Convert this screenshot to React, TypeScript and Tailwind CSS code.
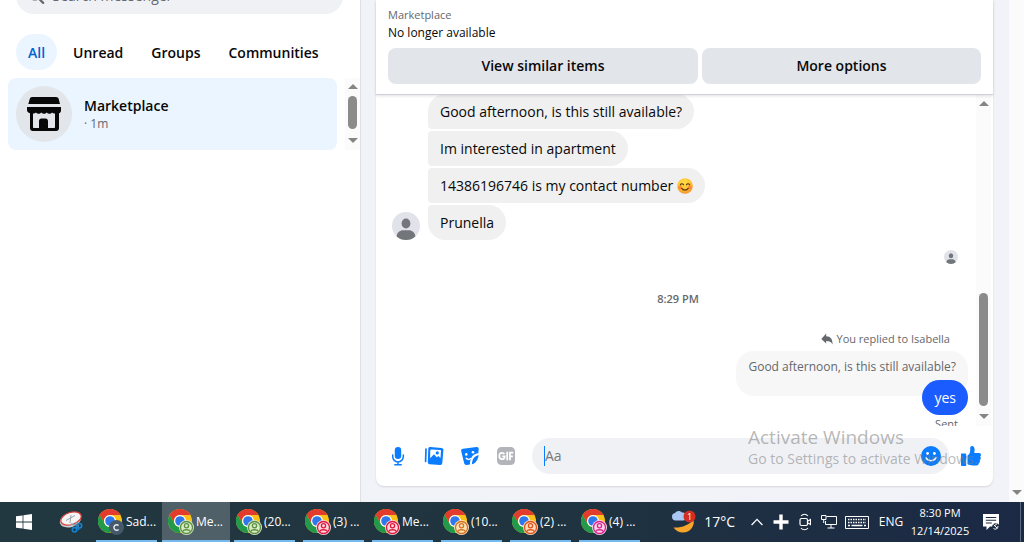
import React from "react";

const PersonAvatar = ({ className }: { className: string }) => (
  <svg viewBox="0 0 28 28" className={className} role="img" aria-label="Profile">
    <circle cx="14" cy="14" r="14" fill="#e2e3ea" />
    <ellipse cx="14" cy="11.500" rx="4.400" ry="5" fill="#727579" />
    <path d="M4.600 24.400C5 20.500 8 18.300 11 18.300h6c3 0 6 2.200 6.400 6.100A14 14 0 0 1 14 28a14 14 0 0 1-9.400-3.600z" fill="#727579" />
  </svg>
);

const StoreIcon = () => (
  <svg viewBox="0 0 34 34" className="size-[34px]" aria-hidden="true">
    <path d="M5 0h24c1.300 0 2.200.7 2.600 1.800L33 7H1.300l1.500-5.200C3.200.7 3.900 0 5 0z" fill="#080809" />
    <path d="M0 10h34v3.700c0 1.200-.8 2.200-2 2.500v15c0 1.600-1.200 2.800-2.800 2.800H5.800C4.200 34 3 32.800 3 31.200v-15c-1.800-.4-3-1.600-3-3z" fill="#080809" />
    <path d="M6 16.600c1.400 0 2.300-.5 2.900-1.200.8.900 1.700 1.300 2.700 1.300s2-.5 2.700-1.300c.8.900 1.700 1.300 2.700 1.300s2-.5 2.700-1.300c.8.900 1.700 1.300 2.700 1.300s2-.5 2.700-1.300c.6.700 1.500 1.200 2.900 1.200V30c0 .7-.4 1-1 1h-6v-7c0-1.400-1-2.500-2.400-2.500h-4.200c-1.400 0-2.400 1.100-2.400 2.500v7H7c-.6 0-1-.3-1-1z" fill="#e2e5ea" />
  </svg>
);

const SmileEmoji = () => (
  <svg viewBox="0 0 16 16" className="size-4" role="img" aria-label="Smiling face with smiling eyes">
    <defs>
      <radialGradient id="face" cx=".45" cy=".3" r=".75">
        <stop offset="0" stopColor="#ffe04a" />
        <stop offset=".6" stopColor="#ffc02e" />
        <stop offset="1" stopColor="#f2852b" />
      </radialGradient>
    </defs>
    <circle cx="8" cy="8" r="7.800" fill="url(#face)" />
    <circle cx="3.200" cy="9.600" r="2" fill="#fa7a3c" opacity=".75" />
    <circle cx="12.800" cy="9.600" r="2" fill="#fa7a3c" opacity=".75" />
    <path d="M3.400 6.800c.6-1.400 2.500-1.400 3.100 0M9.500 6.800c.6-1.400 2.500-1.400 3.100 0M4.800 10.400c1.400 2.200 5 2.200 6.400 0" fill="none" stroke="#5b3414" strokeWidth="1.200" strokeLinecap="round" />
  </svg>
);

const Caret = ({ down = false }: { down?: boolean }) => (
  <svg viewBox="0 0 10 5" className="h-[5px] w-2.5 shrink-0" aria-hidden="true">
    <path d={down ? "M0 0h10L5 5z" : "M0 5h10L5 0z"} fill="#858585" />
  </svg>
);

const badgeColors: Record<string, [string, string]> = {
  green: ["#5d8f45", "#d8ecc4"],
  red: ["#e0173c", "#ffd9df"],
  orange: ["#cf7420", "#ffe3bd"],
  deep: ["#dd5416", "#ffdcc4"],
  pink: ["#d6248a", "#ffd6ec"],
};

const ChromeIcon = ({ badge }: { badge: string }) => {
  const colors = badgeColors[badge];
  return (
    <svg viewBox="0 0 26 26" className="size-[26px] shrink-0" aria-hidden="true">
      <circle cx="12" cy="12" r="12" fill="#fbc116" />
      <path d="M1.600 6A12 12 0 0 1 22.400 6H12a6 6 0 0 0-5.200 9z" fill="#e33b2e" />
      <path d="M1.600 6A12 12 0 0 0 12 24l5.200-9a6 6 0 0 1-10.400 0z" fill="#229a4b" />
      <circle cx="12" cy="12" r="6" fill="#fff" />
      <circle cx="12" cy="12" r="4.800" fill="#2f78ec" />
      {colors ? (
        <>
          <circle cx="18.500" cy="18.500" r="7.500" fill={colors[1]} />
          <circle cx="18.500" cy="18.500" r="6" fill="none" stroke={colors[0]} strokeWidth="1.300" />
          <circle cx="18.500" cy="16.800" r="2.100" fill="none" stroke={colors[0]} strokeWidth="1.300" />
          <path d="M14.600 22.400c1-2.200 6.800-2.200 7.800 0" fill="none" stroke={colors[0]} strokeWidth="1.300" />
        </>
      ) : (
        <>
          <circle cx="18.500" cy="18.500" r="7.500" fill="#46596a" />
          <path d="M20.600 16.600a2.700 2.700 0 1 0 0 3.800" fill="none" stroke="#e8edf0" strokeWidth="1.400" />
        </>
      )}
    </svg>
  );
};

const tabs = ["All", "Unread", "Groups", "Communities"];

const apps = [
  { label: "Sad...", badge: "letter" },
  { label: "Me...", badge: "green", active: true },
  { label: "(20...", badge: "green" },
  { label: "(3) ...", badge: "red" },
  { label: "Me...", badge: "red" },
  { label: "(10...", badge: "orange" },
  { label: "(2) ...", badge: "deep" },
  { label: "(4) ...", badge: "pink" },
];

const bubble = "flex h-[35px] items-center gap-1 bg-[#f0f0f0] px-3 text-sm";

function Sidebar() {
  return (
    <aside className="flex w-[361px] shrink-0 flex-col border-r border-[#dfe0e4] bg-white">
      <div className="flex h-3.5 items-end overflow-hidden pr-[17px] pl-4">
        <label className="flex h-9 w-full shrink-0 items-center gap-2 rounded-full bg-[#f0f1f5] px-3 text-[#65686c]">
          <svg viewBox="0 0 18 18" className="size-[18px]" aria-hidden="true">
            <path d="M12 12l4.500 4.500" stroke="#65686c" strokeWidth="2.400" strokeLinecap="round" />
            <circle cx="7.500" cy="7.500" r="5.500" fill="none" stroke="#65686c" strokeWidth="2" />
          </svg>
          <input aria-label="Search Messenger" placeholder="Search messenger" className="w-full bg-transparent text-sm outline-none placeholder:text-[#65686c]" />
        </label>
      </div>
      <nav className="mt-5 flex gap-1 pl-4">
        {tabs.map((tab, i) => (
          <button key={tab} className={`h-9 rounded-full px-3 pt-0.5 text-sm font-semibold ${i === 0 ? "bg-[#ebf5ff] text-[#0064d1]" : "text-[#080809]"}`}>
            {tab}
          </button>
        ))}
      </nav>
      <div className="mt-2 flex h-[72px] pl-2">
        <a href="#marketplace" className="flex flex-1 items-center gap-3 rounded-lg bg-[#ebf5ff] px-2">
          <span className="flex size-14 items-center justify-center rounded-full bg-[#e2e5ea]">
            <StoreIcon />
          </span>
          <span className="flex flex-col">
            <span className="text-sm leading-5 font-semibold text-[#080809]">Marketplace</span>
            <span className="text-xs leading-4 text-[#65686c]">· 1m</span>
          </span>
        </a>
        <div className="ml-2 flex w-[15px] flex-col items-center bg-[#fbfbfb] pt-1.5 pb-[7px]">
          <Caret />
          <div className="mt-[7px] mb-auto h-[33px] w-[9px] shrink-0 rounded-full bg-[#8b8b8b]" />
          <Caret down />
        </div>
      </div>
    </aside>
  );
}

function Messages() {
  return (
    <div className="flex min-h-0 flex-1 overflow-hidden pr-0.5">
      <div className="flex min-w-0 flex-1 flex-col pr-2 pl-4 text-[#080809] *:shrink-0">
        <div className="flex items-end gap-2">
          <PersonAvatar className="size-7 shrink-0" />
          <div className="-mt-px flex flex-col items-start gap-0.5">
            <div className={`${bubble} rounded-[18px] rounded-bl-sm`}>Good afternoon, is this still available?</div>
            <div className={`${bubble} rounded-r-[18px] rounded-l-sm`}>Im interested in apartment</div>
            <div className={`${bubble} rounded-r-[18px] rounded-l-sm`}>
              14386196746 is my contact number <SmileEmoji />
            </div>
            <div className={`${bubble} rounded-[18px] rounded-tl-sm`}>Prunella</div>
          </div>
        </div>
        <PersonAvatar className="mt-2.5 mr-2.5 size-3.5 self-end" />
        <time className="mt-[27px] mr-1 self-center text-[11px] leading-4 font-semibold text-[#65686c]">8:29 PM</time>
        <div className="mt-6 mr-[18px] flex items-center gap-1 self-end text-[11px] leading-4 text-[#65686c]">
          <svg viewBox="0 0 12 12" className="size-3" aria-hidden="true">
            <path d="M5.200.6v2.600C9.500 3.400 11.800 6 11.500 11.400 10.300 9 8.500 8 5.200 8v2.600L.3 6z" fill="#65686c" />
          </svg>
          You replied to Isabella
        </div>
        <div className="mt-1 h-[45px] self-end rounded-[18px] bg-[#f7f7f7] px-3 pt-2 text-xs leading-4 text-[#65686c]">Good afternoon, is this still available?</div>
        <div className="-mt-4 flex h-[35px] items-center self-end rounded-full bg-[#1b5cff] px-3 text-sm text-white">yes</div>
        <div className="mr-2.5 self-end text-[11px] leading-[18px] text-[#65686c]">Sent</div>
      </div>
      <div className="flex w-[15px] flex-col items-center bg-[#fbfbfb] pt-1.5 pb-[7px]">
        <Caret />
        <div className="mt-auto mb-2 h-[113px] w-[9px] rounded-full bg-[#8b8b8b]" />
        <Caret down />
      </div>
    </div>
  );
}

function Composer() {
  return (
    <div className="flex h-[60px] shrink-0 items-center px-3">
      <button aria-label="Voice clip" className="flex w-5 justify-center">
        <svg viewBox="0 0 20 20" className="size-5">
          <rect x="6.800" y="1" width="6.400" height="12" rx="3.200" fill="#0a7cff" />
          <path d="M4.700 9v1.600a5.300 5.300 0 0 0 10.600 0V9M10 16v2.800M6.800 18.800h6.400" fill="none" stroke="#0a7cff" strokeWidth="1.500" strokeLinecap="round" />
        </svg>
      </button>
      <button aria-label="Attach a photo" className="ml-4 flex w-5 justify-center">
        <svg viewBox="0 0 20 20" className="size-5">
          <path d="M2 3l-.4 12.500" stroke="#0a7cff" strokeWidth="1.700" strokeLinecap="round" />
          <path d="M6.300 1l11.200.9c1.300.1 2 .9 1.900 2.100L18.300 17c-.1 1.300-1 2-2.200 1.900L5.700 18.200c-1.300-.1-2-1-1.900-2.200L4.300 2.800C4.400 1.600 5.200.9 6.300 1z" fill="#0a7cff" />
          <path d="M7 3.400l9.200.7c.6.100.9.400.8 1l-.5 7-2.200-2-1.600 1.200-2.700-3-3.900 4 .2-8.100c0-.6.300-.8.700-.8z" fill="#fff" />
          <circle cx="13.300" cy="6.900" r="1.600" fill="#0a7cff" />
        </svg>
      </button>
      <button aria-label="Choose a sticker" className="ml-4 flex w-5 justify-center">
        <svg viewBox="0 0 20 20" className="size-5">
          <path d="M3 2.800l13.500-1.700c1.300-.2 2.300.7 2.200 2l-.4 4.100c-5 .5-8.300 4-8.400 11.300l-3.400.4c-1.200.1-2-.6-2.300-1.700L1.200 5.300C.9 4 1.700 3 3 2.800z" fill="#0a7cff" />
          <path d="M18.600 9.200c-4 .6-6.600 4-6.700 9 3.300-.6 6.100-4.200 6.700-9z" fill="#0a7cff" />
          <path d="M6.300 12.300c1 1.300 3 1.500 4.500.2" fill="none" stroke="#fff" strokeWidth="1.500" strokeLinecap="round" />
          <circle cx="6.300" cy="8.400" r="1.300" fill="#fff" />
          <circle cx="13" cy="6.300" r="1.300" fill="#fff" />
        </svg>
      </button>
      <button aria-label="Choose a GIF" className="ml-4 flex w-5 justify-center">
        <svg viewBox="0 0 20 20" className="size-5">
          <path d="M6 1h8c3.500 0 5 1.800 5 5v8c0 3.300-1.500 5-5 5H6c-3.500 0-5-1.700-5-5V6c0-3.200 1.500-5 5-5z" fill="#b2b4ba" />
          <path d="M8.400 8.100C7.900 7.200 7 6.800 6 6.800 4.300 6.800 3.300 8 3.300 10s1 3.200 2.700 3.200 2.600-1 2.600-2.800H6.300M11.200 5.800v8.400M14 14.200V6.700h3.400M14 10.300h2.900" fill="none" stroke="#fff" strokeWidth="1.800" />
        </svg>
      </button>
      <div className="ml-4 flex h-9 flex-1 items-center rounded-full bg-[#f0f1f5] pr-2 pl-3">
        <span className="h-5 w-px bg-[#0a7cff]" />
        <input aria-label="Message" placeholder="Aa" className="min-w-0 flex-1 bg-transparent text-sm outline-none placeholder:text-[#77797d]" />
        <button aria-label="Choose an emoji">
          <svg viewBox="0 0 20 20" className="size-5">
            <circle cx="10" cy="10" r="10" fill="#0a7cff" />
            <circle cx="6.600" cy="7.500" r="1.400" fill="#fff" />
            <circle cx="13.400" cy="7.500" r="1.400" fill="#fff" />
            <path d="M5 11.800c1.800 3.800 8.200 3.800 10 0" fill="none" stroke="#fff" strokeWidth="1.500" strokeLinecap="round" />
          </svg>
        </button>
      </div>
      <button aria-label="Send a like" className="ml-3">
        <svg viewBox="0 0 20 20" className="size-5">
          <path d="M0 8.500C0 7.900.4 7.500 1 7.500h3.200c.6 0 1 .4 1 1V19c0 .6-.4 1-1 1H1c-.6 0-1-.4-1-1z" fill="#0a7cff" />
          <path d="M6.500 9.500c2-1.300 2.800-3 2.700-5.500V1.900C9.200.8 9.900 0 11 0c1.800 0 2.800 1.800 2.600 4.200L13.300 7h4.800c1.200 0 1.900.9 1.900 1.900 0 .8-.4 1.400-1 1.700.6.400.9.900.8 1.700 0 .8-.5 1.400-1.200 1.700.4.400.5.900.4 1.500-.1.700-.5 1.200-1.200 1.500.1 1.500-.9 2.500-2.400 2.500h-4c-1.900 0-3.500-.4-4.900-1.400z" fill="#0a7cff" />
        </svg>
      </button>
    </div>
  );
}

function Taskbar() {
  return (
    <footer className="flex h-10 shrink-0 items-stretch bg-linear-to-r from-[#223840] via-[#20343f] to-[#1b2945] text-xs text-white">
      <button aria-label="Start" className="flex w-12 items-center justify-center">
        <svg viewBox="0 0 16 16" className="size-4">
          <path d="M0 2.300l6.600-.9v6.200H0zM7.400 1.300L16 0v7.600H7.400zM0 8.400h6.600v6.200L0 13.700zM7.400 8.400H16V16l-8.600-1.200z" fill="#fff" />
        </svg>
      </button>
      <button aria-label="Snipping Tool" className="flex w-[45px] items-center justify-center">
        <svg viewBox="0 0 24 22" className="h-[22px] w-6">
          <ellipse cx="11.500" cy="9" rx="11" ry="7" transform="rotate(-18 11.500 9)" fill="#c7d0d4" />
          <ellipse cx="12" cy="7.500" rx="10.500" ry="6" transform="rotate(-18 12 7.500)" fill="#f5f5f5" stroke="#d9433c" strokeWidth="1.200" />
          <path d="M7 9.500l9-5M12 4l-1 8" stroke="#9ba4a8" strokeWidth="1" fill="none" />
          <path d="M12 13l8 2M17 11l1 6" stroke="#8d989d" strokeWidth="1.300" />
          <circle cx="15.500" cy="18.800" r="2.200" fill="none" stroke="#1681ce" strokeWidth="1.700" />
          <circle cx="20.500" cy="14.700" r="2.200" fill="none" stroke="#1681ce" strokeWidth="1.700" />
          <path d="M16.500 14l3.500 5" stroke="#1681ce" strokeWidth="1.700" />
        </svg>
      </button>
      <div className="flex gap-px">
        {apps.map((app, i) => (
          <button key={i} className={`flex w-[68px] flex-col ${app.active ? "bg-[#4f6069]" : "pr-1 pl-[3px]"}`}>
            <span className={`flex flex-1 items-center gap-0.5 pt-0.5 whitespace-nowrap ${app.active ? "pl-1.5" : "pl-0.5"}`}>
              <ChromeIcon badge={app.badge} />
              {app.label}
            </span>
            <span className="h-0.5 w-full bg-[#76b9ed]" />
          </button>
        ))}
      </div>
      <div className="ml-auto flex items-center">
        <button className="flex items-center gap-2 text-sm">
          <svg viewBox="0 0 25 24" className="h-6 w-[25px]" aria-hidden="true">
            <path d="M22.500 10c1.500 6-3.500 12.500-10.500 12.500-4 0-7.500-2-9.500-5C11 18 17 15 22.500 10z" fill="#f7a62b" />
            <path d="M4.500 10.500a3.800 3.800 0 0 1-.5-7.500C5.500.5 9 .2 11 2.500c3 0 4.800 2 4.500 4.500 0 2-1.500 3.500-3.500 3.500z" fill="#a9c7f2" />
            <circle cx="18.500" cy="6.500" r="6" fill="#d42d24" />
            <text x="18.500" y="10" textAnchor="middle" fontSize="9" fill="#fff">1</text>
          </svg>
          17°C
        </button>
        <button aria-label="Show hidden icons" className="ml-4">
          <svg viewBox="0 0 12 8" className="h-2 w-3"><path d="M.6 7L6 1.400 11.400 7" fill="none" stroke="#fff" strokeWidth="1.300" /></svg>
        </button>
        <svg viewBox="0 0 16 16" className="ml-2.5 size-4" aria-hidden="true"><path d="M8 .5v15M.5 8h15" stroke="#fff" strokeWidth="3.400" /></svg>
        <svg viewBox="0 0 12 18" className="ml-2.5 h-[18px] w-3" aria-hidden="true">
          <path d="M2 3c2-2.300 5-2.300 7 0M2 15c2 2.300 5 2.300 7 0M9 8l2.500-1.500v5L9 10" fill="none" stroke="#fff" strokeWidth="1.100" />
          <rect x="1" y="5.500" width="7.500" height="7" rx="1.500" fill="none" stroke="#fff" strokeWidth="1.200" />
        </svg>
        <svg viewBox="0 0 16 14" className="ml-2.5 h-3.5 w-4" aria-hidden="true">
          <path d="M5.500 1.500h10v8h-11V6M10 9.500V13M6.500 13h7M.5.500h4.500v4H.5zM2.700 4.500V8" fill="none" stroke="#fff" />
        </svg>
        <svg viewBox="0 0 24 13" className="ml-2 h-[13px] w-6" aria-hidden="true">
          <path d="M.5.500h23v12H.5z" fill="none" stroke="#fff" />
          <path d="M3 3.500h18M3 6.500h18" stroke="#fff" strokeWidth="1.500" strokeDasharray="1.500 1" />
          <path d="M3 9.500h2M6.500 9.500h11M19 9.500h2" stroke="#fff" strokeWidth="1.300" />
        </svg>
        <button className="ml-2 w-7 text-xs">ENG</button>
        <div className="ml-1 w-[62px] text-center text-[11px] leading-[18px] whitespace-nowrap">
          <div>8:30 PM</div>
          <div>12/14/2025</div>
        </div>
        <button aria-label="Notifications" className="ml-3">
          <svg viewBox="0 0 17 17" className="size-[17px]">
            <path d="M0 0h16v12.500H7L3.500 16v-3.500H0z" fill="#fff" />
            <path d="M2.800 3.500h10.400M2.800 6.300h10.400M2.800 9h6" stroke="#1c2c43" strokeWidth="1.100" />
            <circle cx="12.800" cy="12.800" r="3.600" fill="#1c2c43" />
            <path d="M10.500 14.500c2 1.500 4.500 0 4.500-2.500M11 12l3-2.200M10.500 10.500l4 4" stroke="#fff" fill="none" />
          </svg>
        </button>
        <span className="mr-[3px] ml-5 h-10 w-px bg-[#5c6a7c]" />
      </div>
    </footer>
  );
}

export default function App() {
  return (
    <div className="relative flex h-screen flex-col overflow-hidden bg-[#f2f3f8] font-['Open_Sans','Noto_Sans',sans-serif]">
      <div className="flex min-h-0 flex-1">
        <Sidebar />
        <main className="mr-4 mb-4 ml-[15px] flex min-w-0 flex-1 flex-col rounded-b-lg bg-white shadow-[0_1px_2px_rgba(0,0,0,0.12)]">
          <header className="z-10 flex h-[95px] shrink-0 flex-col border-b border-[#cfd0da] px-3 pt-1.5 shadow-[0_1px_3px_rgba(0,0,0,0.12)]">
            <p className="text-[11px] leading-[18px] text-[#65686c]">Marketplace</p>
            <h1 className="text-xs leading-[18px] text-[#080809]">No longer available</h1>
            <div className="mt-1.5 flex gap-1 text-sm font-semibold text-[#080809]">
              <button className="h-9 flex-[10] rounded-lg bg-[#e2e5ea]">View similar items</button>
              <button className="h-9 flex-[9] rounded-lg bg-[#e2e5ea]">More options</button>
            </div>
          </header>
          <Messages />
          <Composer />
        </main>
        <div className="flex w-[15px] shrink-0 flex-col items-center justify-end bg-[#fbfbfb] pb-[7px]">
          <Caret down />
        </div>
      </div>
      <Taskbar />
      <div className="pointer-events-none absolute right-10 bottom-[73px] z-20 w-[236px] whitespace-nowrap text-[#7d7d7d]/55">
        <p className="text-[19px] leading-6">Activate Windows</p>
        <p className="text-sm leading-5">Go to Settings to activate Windows.</p>
      </div>
    </div>
  );
}
